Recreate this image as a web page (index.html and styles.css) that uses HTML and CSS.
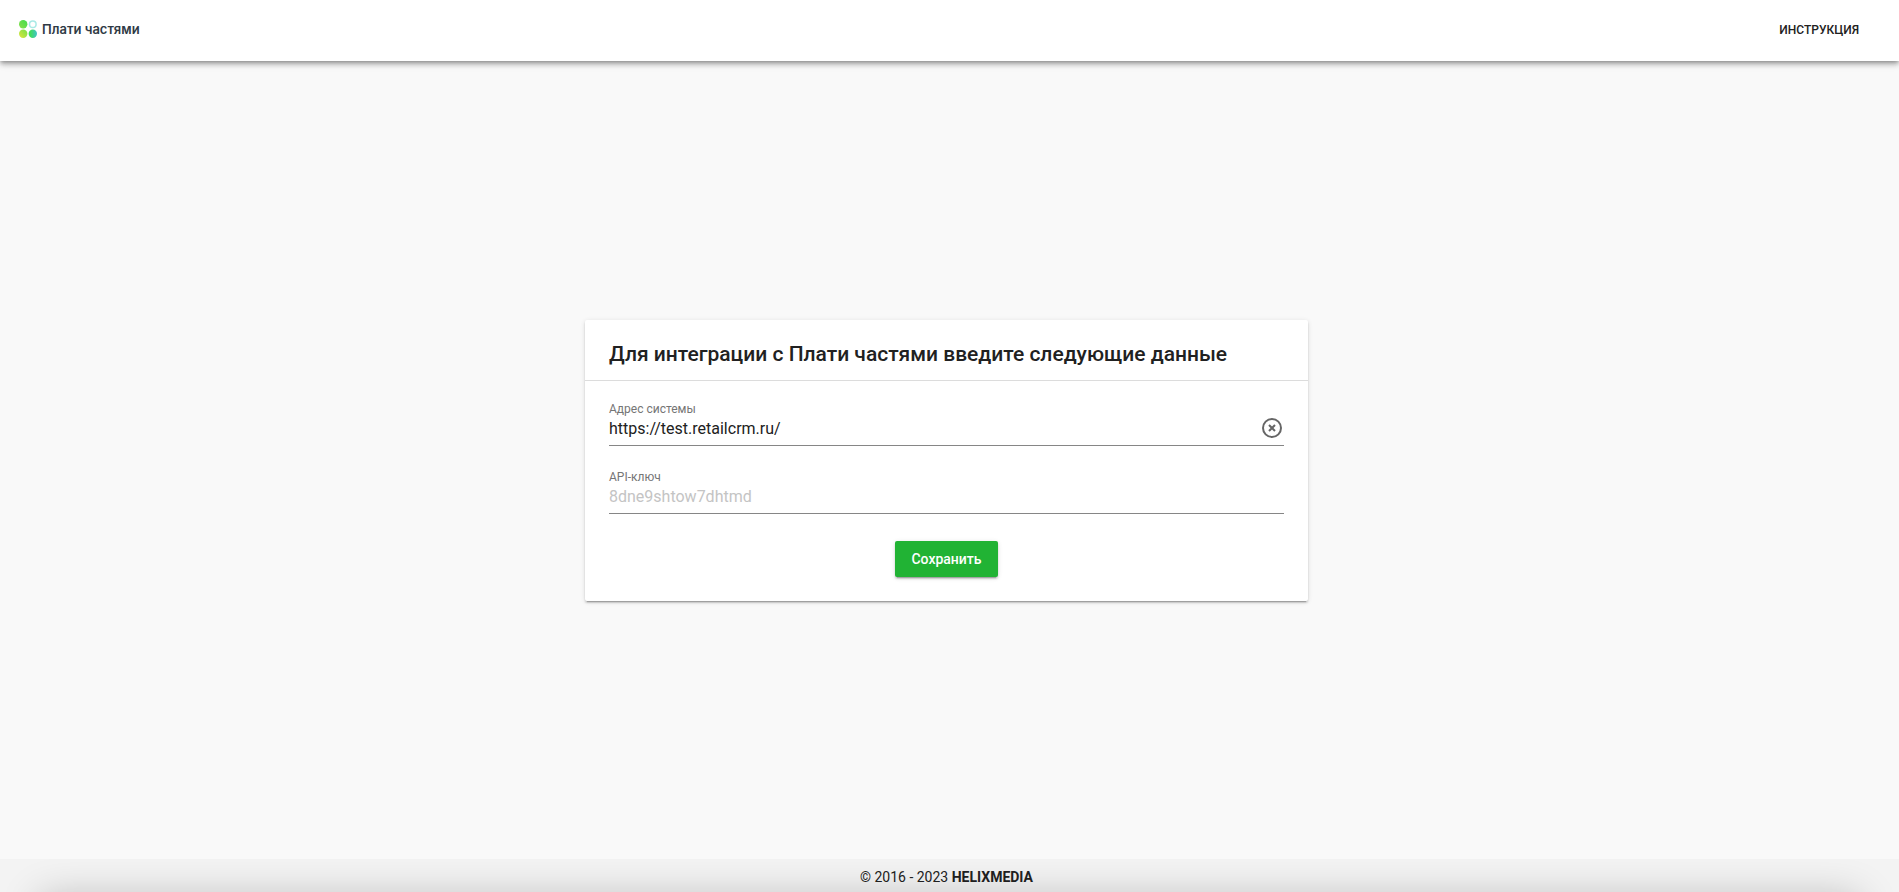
FILE: index.html
```html
<!DOCTYPE html>
<html lang="ru">

<head>
  <meta charset="UTF-8">
  <meta name="viewport" content="width=device-width, initial-scale=1.0">
  <title>Плати частями</title>
  <link rel="stylesheet" href="styles.css">
</head>

<body>
  <header class="header">
    <a class="logo" href="#">
      <svg class="logo-icon" width="18" height="18" viewBox="0 0 18 18" aria-hidden="true">
        <defs>
          <linearGradient id="g1" x1="0" y1="1" x2="1" y2="0">
            <stop offset="0" stop-color="#8be04a" />
            <stop offset="1" stop-color="#3fdc4c" />
          </linearGradient>
          <linearGradient id="g2" x1="0" y1="1" x2="1" y2="0">
            <stop offset="0" stop-color="#e0e63c" />
            <stop offset="1" stop-color="#74e04a" />
          </linearGradient>
          <linearGradient id="g3" x1="0" y1="0" x2="1" y2="0">
            <stop offset="0.2" stop-color="#42dd5a" />
            <stop offset="1" stop-color="#3fc3c8" />
          </linearGradient>
        </defs>
        <circle cx="4.2" cy="4.2" r="4.2" fill="url(#g1)" />
        <circle cx="13.8" cy="4.2" r="3.3" fill="none" stroke="#a9eae6" stroke-width="1.5" />
        <circle cx="4.2" cy="13.8" r="4.2" fill="url(#g2)" />
        <circle cx="13.8" cy="13.8" r="4.2" fill="url(#g3)" />
      </svg>
      <span>Плати частями</span>
    </a>
    <a class="nav-link" href="#">Инструкция</a>
  </header>

  <main class="main">
    <form class="card">
      <h1 class="card-title">Для интеграции с Плати частями введите следующие данные</h1>
      <div class="card-body">
        <div class="field">
          <label class="field-label" for="address">Адрес системы</label>
          <div class="field-row">
            <input class="field-input" id="address" type="text" value="https://test.retailcrm.ru/">
            <button class="clear-btn" type="button" aria-label="Очистить">
              <svg width="24" height="24" viewBox="0 0 24 24" fill="none" stroke="currentColor" stroke-width="2">
                <circle cx="12" cy="12" r="9" />
                <path d="M9 9l6 6M15 9l-6 6" />
              </svg>
            </button>
          </div>
        </div>
        <div class="field">
          <label class="field-label" for="api-key">API-ключ</label>
          <div class="field-row">
            <input class="field-input" id="api-key" type="text" placeholder="8dne9shtow7dhtmd">
          </div>
        </div>
        <button class="save-btn" type="submit">Сохранить</button>
      </div>
    </form>
  </main>

  <footer class="footer">
    <p>© 2016 - 2023 <b>HELIXMEDIA</b></p>
  </footer>
</body>

</html>
```

FILE: styles.css
```css
* {
  margin: 0;
  padding: 0;
  box-sizing: border-box;
}

body {
  display: flex;
  flex-direction: column;
  min-height: 100vh;
  background-color: #f9f9f9;
  color: #212121;
  font-family: Roboto, "Noto Sans", sans-serif;
  font-size: 14px;
}

a {
  color: inherit;
  text-decoration: none;
}

.header {
  display: flex;
  align-items: center;
  justify-content: space-between;
  height: 61px;
  padding: 0 40px 2px 19px;
  background-color: #fff;
  box-shadow: 0 2px 4px -1px rgba(0, 0, 0, .3), 0 4px 5px rgba(0, 0, 0, .16), 0 1px 10px rgba(0, 0, 0, .14);
}

.logo {
  display: flex;
  align-items: center;
  gap: 5px;
  padding-bottom: 2px;
  color: #2f3a45;
  font-family: Inter, "Noto Sans", sans-serif;
  font-size: 13px;
  font-weight: 600;
}

.logo-icon {
  display: block;
}

.nav-link {
  font-size: 12px;
  font-weight: 500;
  text-transform: uppercase;
}

.main {
  display: flex;
  flex: 1;
  align-items: center;
  justify-content: center;
  padding-right: 6px;
}

.card {
  width: 100%;
  max-width: 723px;
  border-radius: 2px;
  background-color: #fff;
  box-shadow: 0 3px 1px -2px rgba(0, 0, 0, .2), 0 2px 2px rgba(0, 0, 0, .14), 0 1px 5px rgba(0, 0, 0, .12);
}

.card-title {
  padding: 22px 24px 14px;
  border-bottom: 1px solid #dcdcdc;
  font-size: 21px;
  font-weight: 500;
  line-height: 24px;
}

.card-body {
  display: flex;
  flex-direction: column;
  gap: 23px;
  padding: 20px 24px 24px;
}

.field {
  border-bottom: 1px solid #868686;
}

.field-label {
  display: block;
  color: #757575;
  font-size: 12px;
  line-height: 16px;
}

.field-row {
  display: flex;
  align-items: center;
  height: 28px;
  padding-bottom: 5px;
}

.field-input {
  flex: 1;
  min-width: 0;
  height: 24px;
  border: 0;
  outline: 0;
  background: none;
  color: #212121;
  font-family: inherit;
  font-size: 16px;
}

.field-input::placeholder {
  color: #c4c4c4;
}

.clear-btn {
  width: 24px;
  height: 24px;
  border: 0;
  background: none;
  color: #666;
  cursor: pointer;
}

.save-btn {
  align-self: center;
  height: 36px;
  margin-top: 4px;
  padding: 0 16px;
  border: 0;
  border-radius: 2px;
  background-color: #21b334;
  box-shadow: 0 3px 1px -2px rgba(0, 0, 0, .2), 0 2px 2px rgba(0, 0, 0, .14), 0 1px 5px rgba(0, 0, 0, .12);
  color: #fff;
  font-family: inherit;
  font-size: 14px;
  font-weight: 500;
  cursor: pointer;
}

.footer {
  position: relative;
  overflow: hidden;
  height: 33px;
  padding-right: 6px;
  background-color: #f3f3f3;
  line-height: 36px;
  text-align: center;
}

/* shade rising from the bottom edge */
.footer::after {
  content: "";
  position: absolute;
  right: 40px;
  bottom: -66px;
  left: 40px;
  height: 60px;
  box-shadow: 0 0 40px rgba(0, 0, 0, .24);
}
```
